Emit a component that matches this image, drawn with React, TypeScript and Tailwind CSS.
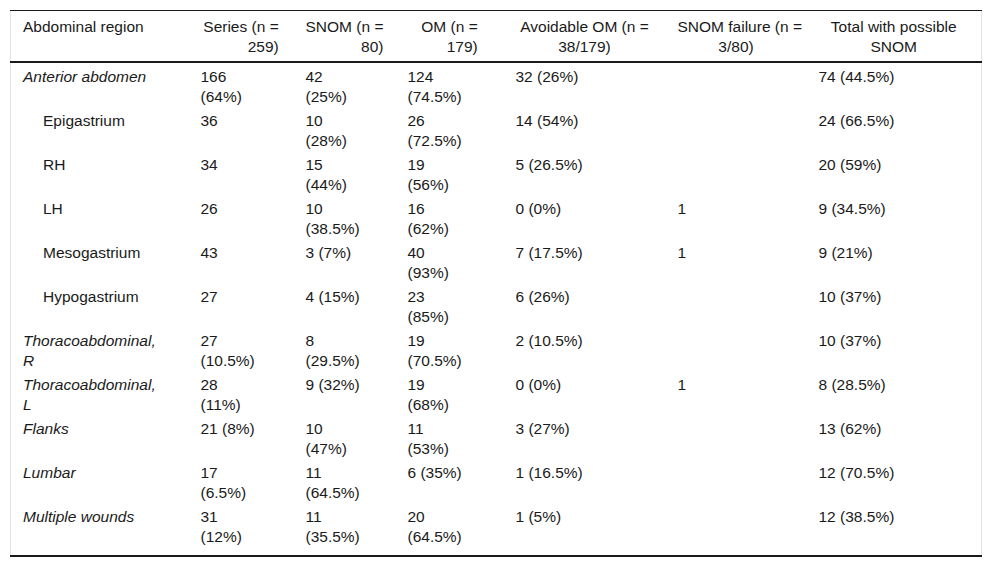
import React from 'react';

type Row = {
  label: string[];
  italic?: boolean;
  indent?: boolean;
  cells: string[][];
};

const headers: { lines: string[]; align: 'left' | 'stack' | 'center' }[] = [
  { lines: ['Abdominal region'], align: 'left' },
  { lines: ['Series (n =', '259)'], align: 'stack' },
  { lines: ['SNOM (n =', '80)'], align: 'stack' },
  { lines: ['OM (n =', '179)'], align: 'stack' },
  { lines: ['Avoidable OM (n =', '38/179)'], align: 'center' },
  { lines: ['SNOM failure (n =', '3/80)'], align: 'center' },
  { lines: ['Total with possible', 'SNOM'], align: 'center' },
];

const rows: Row[] = [
  { label: ['Anterior abdomen'], italic: true, cells: [['166', '(64%)'], ['42', '(25%)'], ['124', '(74.5%)'], ['32 (26%)'], [], ['74 (44.5%)']] },
  { label: ['Epigastrium'], indent: true, cells: [['36'], ['10', '(28%)'], ['26', '(72.5%)'], ['14 (54%)'], [], ['24 (66.5%)']] },
  { label: ['RH'], indent: true, cells: [['34'], ['15', '(44%)'], ['19', '(56%)'], ['5 (26.5%)'], [], ['20 (59%)']] },
  { label: ['LH'], indent: true, cells: [['26'], ['10', '(38.5%)'], ['16', '(62%)'], ['0 (0%)'], ['1'], ['9 (34.5%)']] },
  { label: ['Mesogastrium'], indent: true, cells: [['43'], ['3 (7%)'], ['40', '(93%)'], ['7 (17.5%)'], ['1'], ['9 (21%)']] },
  { label: ['Hypogastrium'], indent: true, cells: [['27'], ['4 (15%)'], ['23', '(85%)'], ['6 (26%)'], [], ['10 (37%)']] },
  { label: ['Thoracoabdominal,', 'R'], italic: true, cells: [['27', '(10.5%)'], ['8', '(29.5%)'], ['19', '(70.5%)'], ['2 (10.5%)'], [], ['10 (37%)']] },
  { label: ['Thoracoabdominal,', 'L'], italic: true, cells: [['28', '(11%)'], ['9 (32%)'], ['19', '(68%)'], ['0 (0%)'], ['1'], ['8 (28.5%)']] },
  { label: ['Flanks'], italic: true, cells: [['21 (8%)'], ['10', '(47%)'], ['11', '(53%)'], ['3 (27%)'], [], ['13 (62%)']] },
  { label: ['Lumbar'], italic: true, cells: [['17', '(6.5%)'], ['11', '(64.5%)'], ['6 (35%)'], ['1 (16.5%)'], [], ['12 (70.5%)']] },
  { label: ['Multiple wounds'], italic: true, cells: [['31', '(12%)'], ['11', '(35.5%)'], ['20', '(64.5%)'], ['1 (5%)'], [], ['12 (38.5%)']] },
];

const widths = ['w-[178px]', 'w-[105px]', 'w-[102px]', 'w-[108px]', 'w-[162px]', 'w-[141px]', 'w-[175px]'];

const Lines = ({ lines }: { lines: string[] }) => (
  <>
    {lines.map((l, i) => (
      <span key={i} className="block whitespace-nowrap">{l}</span>
    ))}
  </>
);

export default function App() {
  return (
    <div className="bg-white min-h-[567px] pt-[10px] pl-[10px] font-['Liberation_Sans',Arial,sans-serif] text-[15.5px] leading-[20px] text-[#1a1a1a]">
      <table className="table-fixed border-collapse w-[971px] border-x border-x-[#e3e3e3]">
        <colgroup>
          {widths.map((w, i) => <col key={i} className={w} />)}
        </colgroup>
        <thead>
          <tr className="border-t border-t-[#1a1a1a] border-b-2 border-b-[#1a1a1a]">
            {headers.map((h, i) => (
              <th key={i} className={`font-normal align-top px-[12px] pt-[6px] pb-[4px] ${h.align === 'left' ? 'text-left' : 'text-center'}`}>
                {h.align === 'stack' ? (
                  <span className="inline-block text-right">
                    <Lines lines={h.lines} />
                  </span>
                ) : (
                  <Lines lines={h.lines} />
                )}
              </th>
            ))}
          </tr>
        </thead>
        <tbody className="border-b-2 border-b-[#1a1a1a]">
          {rows.map((r, ri) => {
            const last = ri === rows.length - 1;
            return (
              <tr key={ri}>
                <td className={`align-top pt-[4px] ${last ? 'pb-[8px]' : 'pb-0'} ${r.indent ? 'pl-[32px]' : 'pl-[12px]'} pr-[12px] ${r.italic ? 'italic' : ''}`}>
                  <Lines lines={r.label} />
                </td>
                {r.cells.map((c, ci) => (
                  <td key={ci} className={`align-top pt-[4px] ${last ? 'pb-[8px]' : 'pb-0'} px-[12px]`}>
                    <Lines lines={c} />
                  </td>
                ))}
              </tr>
            );
          })}
        </tbody>
      </table>
    </div>
  );
}
